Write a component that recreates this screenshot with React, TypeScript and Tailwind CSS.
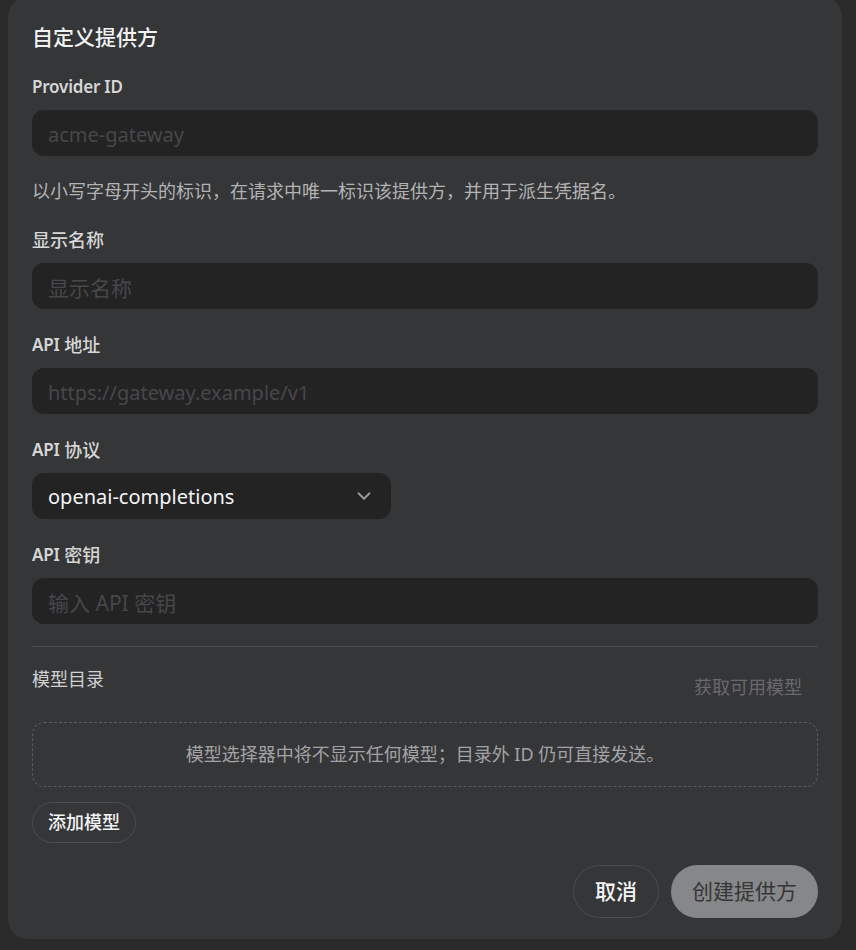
import React from "react";
import { ChevronDown } from "lucide-react";

const font = { fontFamily: '"Noto Sans", "Noto Sans CJK SC", sans-serif' };

function Label({ children }: { children: React.ReactNode }) {
  return (
    <div className="flex h-[24px] items-center overflow-hidden whitespace-pre text-[18px] font-medium text-[#d6d6d6]">
      {children}
    </div>
  );
}

function Latin({ children }: { children: React.ReactNode }) {
  return <span className="text-[17px] font-semibold tracking-[-0.2px]">{children}</span>;
}

function Input({ placeholder, latin }: { placeholder: string; latin?: boolean }) {
  return (
    <input
      placeholder={placeholder}
      className={
        latin
          ? "mt-[11px] block h-[46px] w-full rounded-[12px] bg-[#232324] px-4 pt-[3px] text-[20px] text-[#f0f0f0] placeholder:text-[#47474a] outline-none"
          : "mt-[11px] block h-[46px] w-full rounded-[12px] bg-[#232324] px-4 pt-[3px] text-[21px] text-[#f0f0f0] placeholder:text-[#47474a] outline-none"
      }
    />
  );
}

export default function App() {
  return (
    <div className="h-[950px] w-[856px] overflow-hidden bg-[#2a2a2b]" style={font}>
      <div className="ml-2 mr-[14px] -mt-[3px] h-[942px] rounded-[20px] bg-[#353638] px-6 pt-[25px] flex flex-col">
        <h1 className="h-[30px] text-[21px] leading-[30px] font-medium text-[#f2f2f2]">自定义提供方</h1>

        <div className="mt-[23px]">
          <Label>
            <Latin>Provider ID</Latin>
          </Label>
          <Input placeholder="acme-gateway" latin />
        </div>
        <p className="mt-[22px] h-[26px] text-[18px] leading-[26px] text-[#b3b3b4]">
          以小写字母开头的标识，在请求中唯一标识该提供方，并用于派生凭据名。
        </p>

        <div className="mt-[24px]">
          <Label>显示名称</Label>
          <Input placeholder="显示名称" />
        </div>

        <div className="mt-[24px]">
          <Label>
            <Latin>API</Latin> 地址
          </Label>
          <Input placeholder="https://gateway.example/v1" latin />
        </div>

        <div className="mt-[24px]">
          <Label>
            <Latin>API</Latin> 协议
          </Label>
          <div className="mt-[11px] flex h-[46px] w-[359px] items-center justify-between rounded-[12px] bg-[#232324] pl-4 pr-[16px]">
            <span className="pt-[2px] text-[20px] text-[#f5f5f5]">openai-completions</span>
            <ChevronDown size={22} strokeWidth={2} className="text-[#9a9ba0]" />
          </div>
        </div>

        <div className="mt-[24px]">
          <Label>
            <Latin>API</Latin> 密钥
          </Label>
          <Input placeholder="输入 API 密钥" />
        </div>

        <div className="mt-[22px] h-px bg-[#4b4b4d]" />

        <div className="mt-[20px] flex h-[40px] items-start justify-between">
          <div className="h-[24px] text-[18px] leading-[24px] text-[#d0d0d0]">模型目录</div>
          <button className="h-[40px] rounded-full px-4 text-[18px] text-[#69696b]">获取可用模型</button>
        </div>

        <div className="mt-[15px] flex h-[65px] items-center justify-center rounded-[12px] border border-dashed border-[#5a5a5c] text-[18px] text-[#a3a3a5]">
          模型选择器中将不显示任何模型；目录外 ID 仍可直接发送。
        </div>

        <div className="mt-[15px] flex h-[41px]">
          <button className="h-[41px] rounded-full border border-[#4c4c4e] px-[15px] text-[18px] font-medium text-[#f2f2f2]">
            添加模型
          </button>
        </div>

        <div className="mt-[22px] flex justify-end gap-3">
          <button className="h-[53px] w-[86px] rounded-full border border-[#4c4c4e] text-[21px] font-medium text-[#f5f5f5]">
            取消
          </button>
          <button className="h-[53px] w-[147px] rounded-full bg-[#868788] text-[21px] text-[#353637]">
            创建提供方
          </button>
        </div>
      </div>
    </div>
  );
}
